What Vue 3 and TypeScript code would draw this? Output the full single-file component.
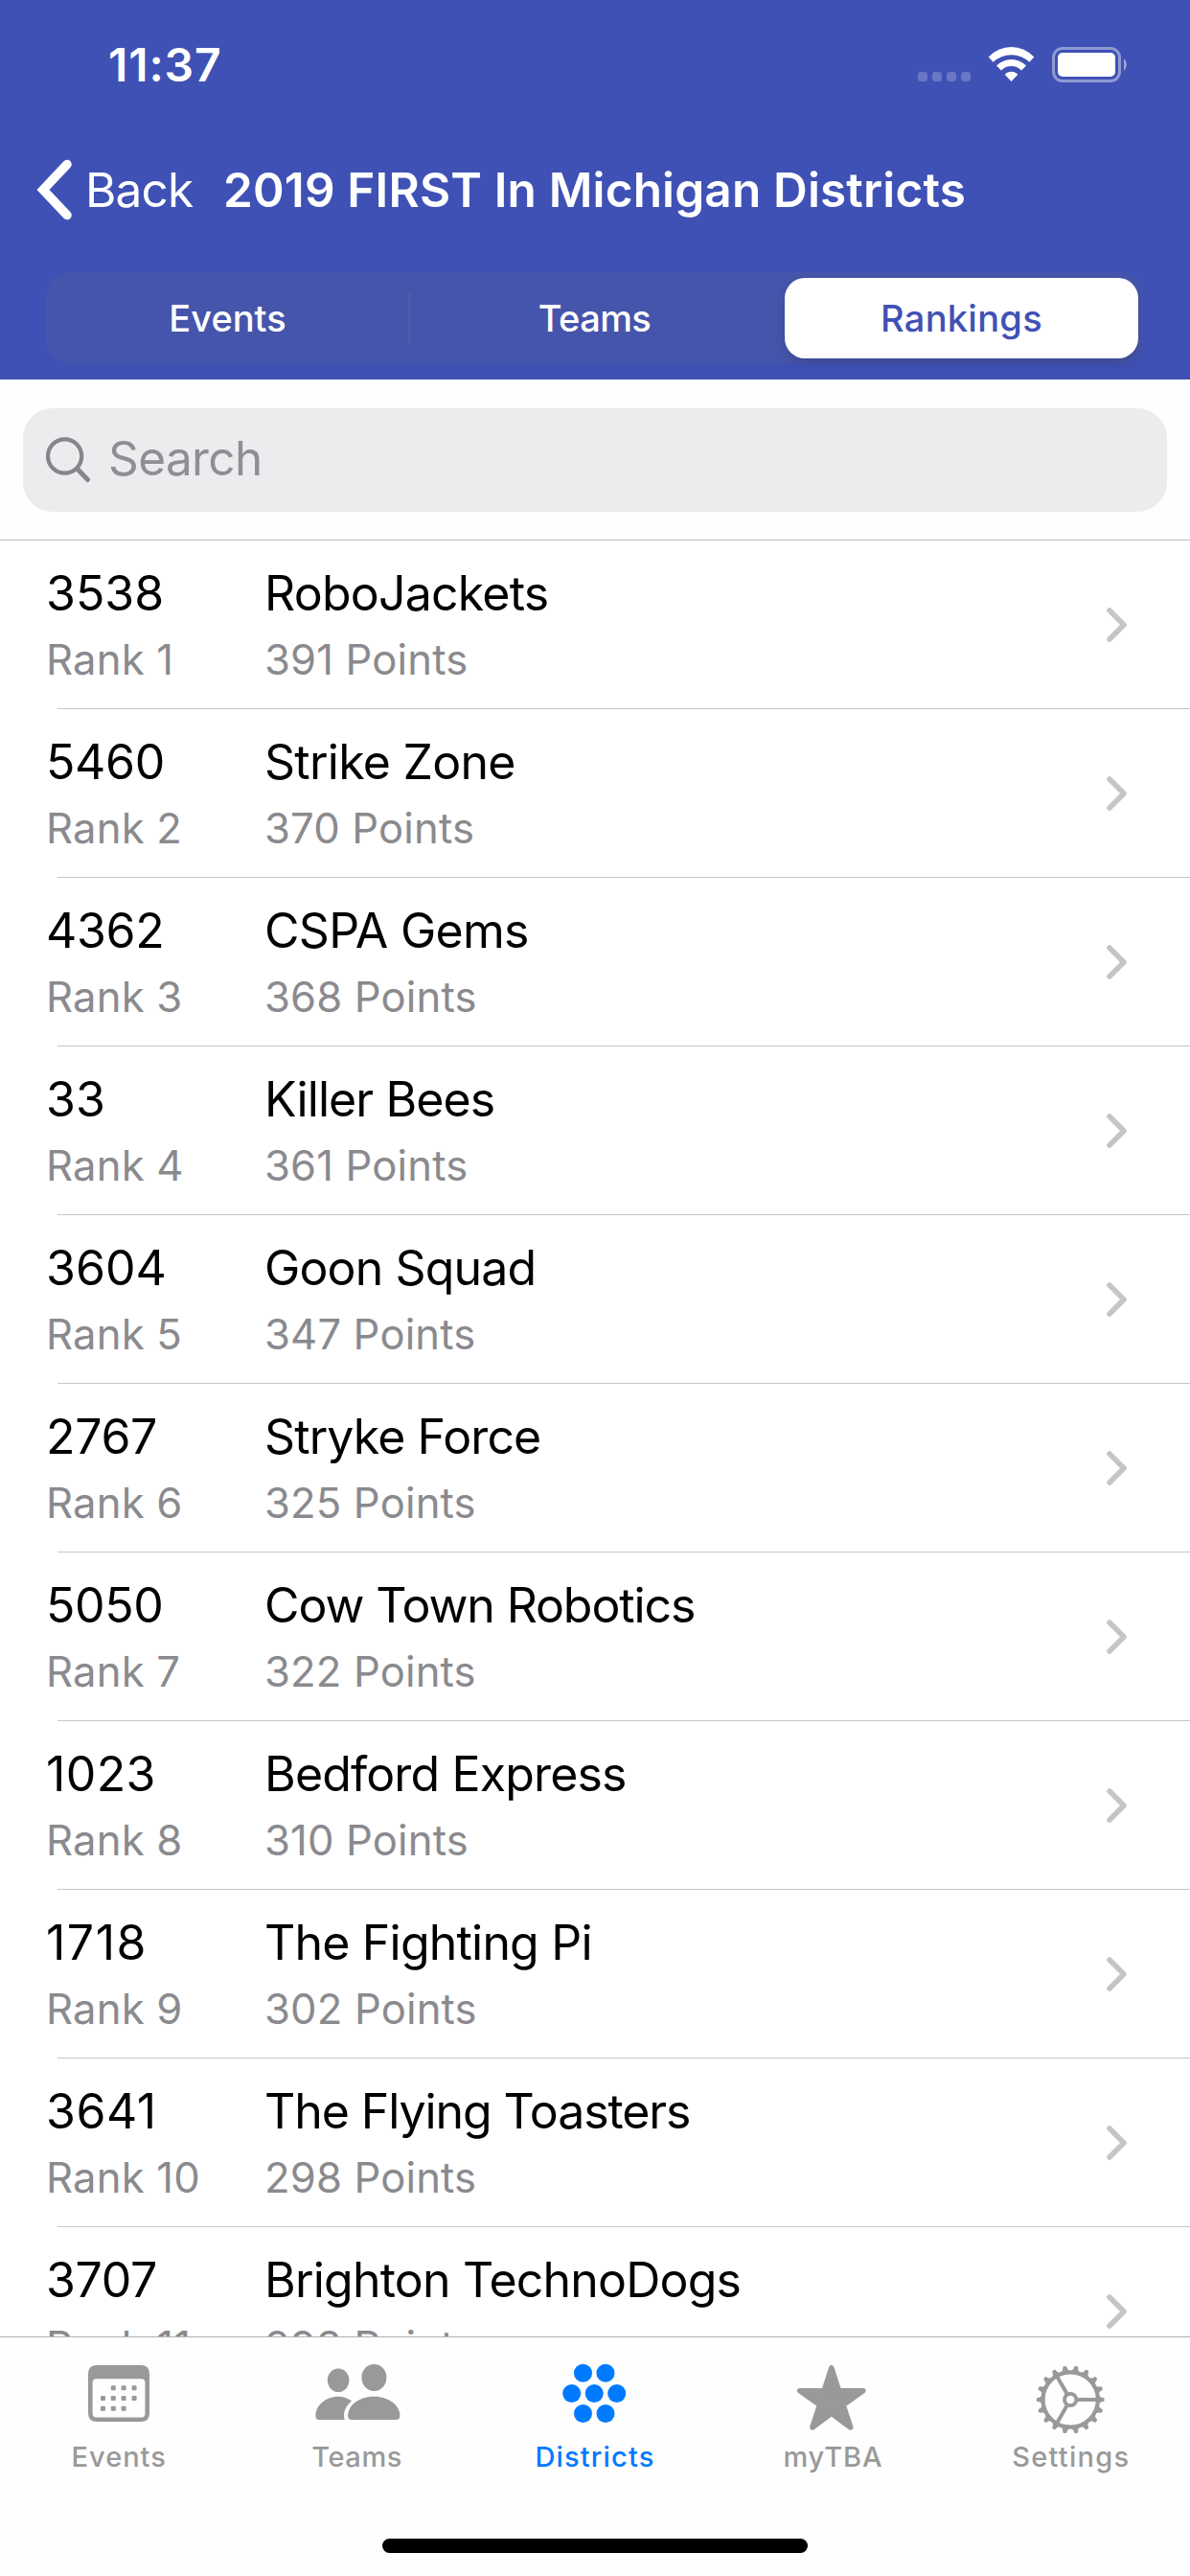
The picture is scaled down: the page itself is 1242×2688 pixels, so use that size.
<script setup lang="ts">
interface Ranking {
  team: string
  name: string
  points: number
  tracking: number
  teamTracking?: number
}

interface Tab {
  id: string
  label: string
  tracking: number
}

const rankings: Ranking[] = [
  { team: '3538', name: 'RoboJackets', points: 391, tracking: -0.77 },
  { team: '5460', name: 'Strike Zone', points: 370, tracking: -0.73, teamTracking: -0.3 },
  { team: '4362', name: 'CSPA Gems', points: 368, tracking: -0.7, teamTracking: -0.3 },
  { team: '33', name: 'Killer Bees', points: 361, tracking: -0.9 },
  { team: '3604', name: 'Goon Squad', points: 347, tracking: -0.85 },
  { team: '2767', name: 'Stryke Force', points: 325, tracking: -0.9, teamTracking: -0.3 },
  { team: '5050', name: 'Cow Town Robotics', points: 322, tracking: -1.1, teamTracking: -0.4 },
  { team: '1023', name: 'Bedford Express', points: 310, tracking: -0.83, teamTracking: 0.4 },
  { team: '1718', name: 'The Fighting Pi', points: 302, tracking: -0.8, teamTracking: 1.5 },
  { team: '3641', name: 'The Flying Toasters', points: 298, tracking: -1.08, teamTracking: 0.5 },
  { team: '3707', name: 'Brighton TechnoDogs', points: 293, tracking: -0.8, teamTracking: -0.3 },
]

const tabs: Tab[] = [
  { id: 'events', label: 'Events', tracking: 1 },
  { id: 'teams', label: 'Teams', tracking: 0.6 },
  { id: 'districts', label: 'Districts', tracking: 1.16 },
  { id: 'mytba', label: 'myTBA', tracking: 0.9 },
  { id: 'settings', label: 'Settings', tracking: 1.27 },
]

const activeTab = 'districts'

const calendarDots: [number, number][] = [
  [44.3, 29.7], [55.1, 29.7], [66.1, 29.7],
  [33.5, 40.5], [44.3, 40.5], [55.1, 40.5], [66.1, 40.5],
  [33.5, 51.3], [44.3, 51.3], [55.1, 51.3],
]

const clusterDots: [number, number][] = [
  [37.5, 14.3], [61, 14.3],
  [25.7, 35.5], [49.2, 35.5], [72.7, 35.5],
  [37.5, 56.5], [61, 56.5],
]

const teeth = Array.from({ length: 18 }, (_, i) => i * 20)
const spokes = [0, 120, 240]
</script>

<template>
  <div class="screen">
    <header class="header">
      <div class="status">
        <span class="time">11:37</span>
        <svg class="indicators" width="230" height="50" viewBox="0 0 230 50">
          <g fill="#fff" fill-opacity=".22">
            <rect v-for="i in 4" :key="i" :x="8 + (i - 1) * 15" y="35" width="10" height="10" rx="3.2" />
          </g>
          <g fill="#fff">
            <path d="M81.7 19.5A32.2 32.2 0 0 1 129.3 19.5L124.4 24.8A27.3 27.3 0 0 0 86.6 24.8Z" />
            <path d="M90 28.4A22.2 22.2 0 0 1 121 28.4L116 33.5A14.6 14.6 0 0 0 95 33.5Z" />
            <path d="M98.7 37.8A9 9 0 0 1 112.3 37.8L105.5 45Z" />
            <rect x="154" y="15" width="60" height="25" rx="5" />
          </g>
          <rect x="149.5" y="10.5" width="69" height="34" rx="9.5" fill="none" stroke="#fff" stroke-opacity=".42" stroke-width="3" />
          <path d="M223 21A9 9 0 0 1 223 34Z" fill="#fff" fill-opacity=".5" />
        </svg>
      </div>
      <div class="nav">
        <svg class="back-arrow" width="38" height="64" viewBox="0 0 38 64">
          <path d="M32 5.5L7 32L32 58.5" fill="none" stroke="#fff" stroke-width="9.5" stroke-linecap="round" stroke-linejoin="miter" />
        </svg>
        <span class="back">Back</span>
        <h1 class="title">2019 FIRST In Michigan Districts</h1>
      </div>
      <div class="segments">
        <span class="segment">Events</span>
        <i class="divider"></i>
        <span class="segment segment-teams">Teams</span>
        <span class="segment selected">Rankings</span>
      </div>
    </header>

    <div class="search-bar">
      <div class="search">
        <svg class="search-icon" width="50" height="50" viewBox="0 0 50 50">
          <circle cx="21.6" cy="21" r="17.6" fill="none" stroke="#85858a" stroke-width="4.2" />
          <path d="M34.5 34L45.5 45.5" stroke="#85858a" stroke-width="5" stroke-linecap="round" />
        </svg>
        <span class="placeholder">Search</span>
      </div>
    </div>

    <main class="list">
      <template v-for="(r, i) in rankings" :key="r.team">
        <div class="row">
          <div class="col-team">
            <div class="primary" :style="{ letterSpacing: (r.teamTracking ?? 0) + 'px' }">{{ r.team }}</div>
            <div class="secondary rank">Rank {{ i + 1 }}</div>
          </div>
          <div class="col-name">
            <div class="primary" :style="{ letterSpacing: r.tracking + 'px' }">{{ r.name }}</div>
            <div class="secondary">{{ r.points }} Points</div>
          </div>
          <svg class="chevron" width="24" height="38" viewBox="0 0 24 38">
            <path d="M4 4L19 19L4 34" fill="none" stroke="#c5c5c7" stroke-width="5.6" stroke-linecap="round" stroke-linejoin="round" />
          </svg>
        </div>
        <div class="separator"></div>
      </template>
    </main>

    <footer class="tab-bar">
      <nav class="tabs">
        <div v-for="t in tabs" :key="t.id" class="tab" :class="{ active: t.id === activeTab }">
          <svg width="100" height="84" viewBox="0 0 100 84" fill="currentColor">
            <template v-if="t.id === 'events'">
              <path fill-rule="evenodd" d="M27 6H73Q82 6 82 15V56Q82 65 73 65H27Q18 65 18 56V15Q18 6 27 6ZM26.6 20.3Q22.6 20.3 22.6 24.3V56.6Q22.6 60.6 26.6 60.6H73.4Q77.4 60.6 77.4 56.6V24.3Q77.4 20.3 73.4 20.3Z" />
              <rect v-for="([x, y], k) in calendarDots" :key="k" :x="x - 2.5" :y="y - 2.5" width="5" height="5" rx=".8" />
            </template>
            <template v-else-if="t.id === 'teams'">
              <ellipse cx="30.1" cy="21.7" rx="11.3" ry="12.3" />
              <ellipse cx="67.4" cy="19" rx="13" ry="14" />
              <path d="M10.5 63C7.5 63 6.4 61.5 6.4 58.5C6.4 48 17 38.7 30.1 38.7C35.5 38.7 40 40.3 44 43.5C39 47.5 36 53 36 58.5C36 60.5 36.3 62 37 63Z" />
              <path d="M44.5 63C41.5 63 40.1 61.5 40.1 58.5C40.1 49 50.5 38.7 67.3 38.7C84 38.7 94.4 49 94.4 58.5C94.4 61.5 93 63 90 63Z" />
            </template>
            <template v-else-if="t.id === 'districts'">
              <circle v-for="([x, y], k) in clusterDots" :key="k" :cx="x" :cy="y" r="9.5" />
            </template>
            <path
              v-else-if="t.id === 'mytba'"
              d="M48.8 9L56.5 32.7H81.8L61 47.4L68.7 70.9L48.8 56.2L28.9 70.9L36.6 47.4L15.8 32.7H41.1Z"
              stroke="currentColor"
              stroke-width="5.6"
              stroke-linejoin="round"
            />
            <g v-else transform="translate(49.2 42)">
              <circle r="28.7" fill="none" stroke="currentColor" stroke-width="4.2" />
              <circle r="6.2" fill="none" stroke="currentColor" stroke-width="3.8" />
              <path v-for="a in teeth" :key="a" :transform="`rotate(${a})`" d="M29.5 -4.2L32 -2.6L35 -1.8Q36.2 0 35 1.8L32 2.6L29.5 4.2Z" />
              <path v-for="a in spokes" :key="'s' + a" :transform="`rotate(${a})`" d="M7 -2H28V2H7Z" />
            </g>
          </svg>
          <span class="tab-label" :style="{ letterSpacing: t.tracking + 'px' }">{{ t.label }}</span>
        </div>
      </nav>
      <div class="home-indicator"></div>
    </footer>
  </div>
</template>

<style>
body {
  margin: 0;
  background: #fff;
}
</style>

<style scoped>
.screen {
  display: flex;
  flex-direction: column;
  width: 1242px;
  height: 2688px;
  overflow: hidden;
  background: #fff;
  font-family: Inter, "Liberation Sans", sans-serif;
  white-space: nowrap;
}

.header {
  flex: none;
  height: 396px;
  background: #3f51b5;
  color: #fff;
}

.status {
  display: flex;
  justify-content: space-between;
  align-items: flex-start;
  height: 132px;
  padding: 0 62px 0 113px;
  box-sizing: border-box;
}

.time {
  margin-top: 38px;
  font-size: 48px;
  font-weight: 600;
  line-height: 60px;
  letter-spacing: 0.9px;
}

.indicators {
  margin-top: 40px;
}

.nav {
  display: flex;
  align-items: center;
  height: 132px;
  padding-left: 38px;
}

.back-arrow {
  margin-right: 13px;
}

.back {
  width: 144px;
  font-size: 49.5px;
  line-height: 60px;
  letter-spacing: -0.8px;
}

.title {
  margin: 0;
  font-size: 49.5px;
  font-weight: 600;
  line-height: 60px;
  letter-spacing: 0.16px;
}

.segments {
  display: flex;
  align-items: center;
  height: 96px;
  margin: 20px 48px 0;
  padding: 6px;
  box-sizing: border-box;
  border-radius: 26px;
  background: #4655ac;
}

.segment {
  width: 367px;
  font-size: 38px;
  font-weight: 500;
  line-height: 84px;
  text-align: center;
}

.segment-teams {
  letter-spacing: -0.6px;
}

.divider {
  width: 3px;
  height: 54px;
  margin: 0 8px 0 5px;
  background: #5059a8;
}

.selected {
  width: 369px;
  margin-left: 15px;
  border-radius: 21px;
  background: #fff;
  color: #3f51b5;
  font-weight: 550;
  letter-spacing: 0.3px;
  box-shadow: 0 6px 14px rgba(0, 0, 0, 0.12), 0 3px 3px rgba(0, 0, 0, 0.04);
}

.search-bar {
  flex: none;
  height: 168px;
  padding: 30px 24px 0;
  box-sizing: border-box;
  border-bottom: 1px solid #bbbbbd;
  background: #fefefe;
}

.search {
  display: flex;
  align-items: center;
  height: 108px;
  padding-left: 22px;
  border-radius: 31px;
  background: #ececee;
}

.placeholder {
  margin-left: 17px;
  padding-bottom: 4px;
  color: #8e8e93;
  font-size: 49.5px;
  line-height: 60px;
  letter-spacing: -0.6px;
}

.list {
  flex: 1;
  min-height: 0;
  overflow: hidden;
}

.row {
  display: flex;
  height: 175px;
  padding: 25px 64px 0 48px;
  box-sizing: border-box;
}

.col-team {
  width: 228px;
}

.col-name {
  flex: 1;
}

.primary {
  color: #000;
  font-size: 50px;
  line-height: 60px;
}

.secondary {
  margin-top: 12px;
  color: #8a8a8e;
  font-size: 43.6px;
  line-height: 56px;
  letter-spacing: 0.15px;
}

.rank {
  letter-spacing: 0.2px;
}

.chevron {
  margin-top: 44px;
}

.separator {
  height: 1px;
  margin-left: 60px;
  background: #c6c6c8;
}

.tab-bar {
  flex: none;
  display: flex;
  flex-direction: column;
  height: 250px;
  box-sizing: border-box;
  border-top: 1px solid #b2b2b2;
  background: #fefefe;
}

.tabs {
  display: flex;
  padding-top: 23px;
}

.tab {
  flex: 1;
  display: flex;
  flex-direction: column;
  align-items: center;
  color: #999;
}

.tab.active {
  color: #007aff;
}

.tab-label {
  font-size: 29px;
  font-weight: 500;
  line-height: 36px;
}

.home-indicator {
  width: 444px;
  height: 15px;
  margin: 67px auto 0;
  border-radius: 8px;
  background: #000;
}
</style>
